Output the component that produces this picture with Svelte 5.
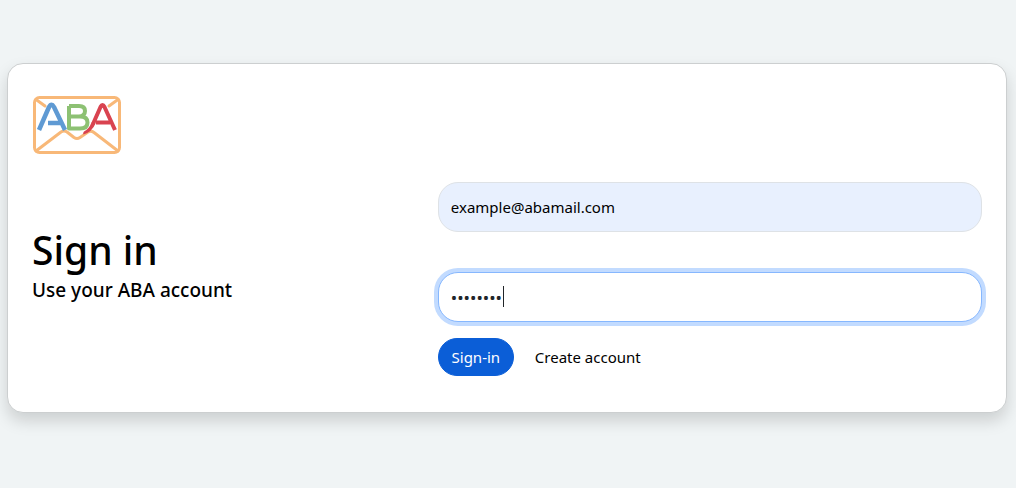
<script>
  let email = $state('example@abamail.com');
  let password = $state('password');
</script>

<main>
  <section class="card">
    <svg class="logo" viewBox="0 0 90 60" role="img" aria-label="ABA Mail">
      <g fill="none" stroke="#f8b878" stroke-width="3" stroke-linejoin="round" stroke-linecap="round">
        <rect x="2.500" y="2.500" width="85" height="55" rx="5" />
        <path d="M4 4.500 L13 11 M86 4.500 L77 11" />
        <path d="M4 56 L29 37 Q32 35 35 37 L42 42.500 Q45 44.500 48 42.500 L56 37 Q59 35 62 37.500 L86 56" />
      </g>
      <g fill="none" stroke-width="4" stroke-linejoin="round">
        <path stroke="#5f9ad3" stroke-width="4.500" d="M7 35 L17 12 Q19.500 7.500 22 12 L33 35 M16 28 H28" />
        <path stroke="#8dc173" d="M37 11 V33.500 H48 Q55.500 33.500 55.500 27.500 Q55.500 21.500 48 21.500 H37 M47 21.500 Q53 21 53 16 Q53 11 47 11 H37" />
        <path stroke="#d94350" d="M64 27.500 H78 M61 29 L68.500 12 Q70.500 8 72.500 12 L83 35" />
      </g>
      <path fill="#d94350" d="M59.500 27.500 L63.500 28.500 Q60 37 51.500 39.500 Q50.500 38 52 36.500 Q57 34 59.500 27.500 Z" />
    </svg>

    <div class="grid">
      <header>
        <h1>Sign in</h1>
        <p>Use your ABA account</p>
      </header>

      <form onsubmit={(e) => e.preventDefault()}>
        <input class="filled" type="email" aria-label="Email" autocomplete="off" bind:value={email} />
        <div class="field">
          <input class="active" type="password" aria-label="Password" autocomplete="off" bind:value={password} />
          <span class="caret"></span>
        </div>
        <div class="actions">
          <button type="submit">Sign-in</button>
          <a href="#create">Create account</a>
        </div>
      </form>
    </div>
  </section>
</main>

<style>
  :global(body) {
    margin: 0;
    background: #f0f4f5;
  }

  main {
    box-sizing: border-box;
    min-height: 100vh;
    padding: 63px 9px 75px 7px;
    font-family: 'Noto Sans', 'Open Sans', sans-serif;
    font-size: 15px;
    line-height: 24px;
    color: #000;
  }

  .card {
    padding: 31px 24px 36px;
    background: #fff;
    border: 1px solid #cccfd0;
    border-radius: 16px;
    box-shadow: 0 8px 16px rgba(0, 0, 0, 0.15);
  }

  .logo {
    display: block;
    width: 90px;
    height: 60px;
  }

  .grid {
    display: grid;
    grid-template-columns: repeat(12, 1fr);
    column-gap: 24px;
    padding-top: 27px;
  }

  header {
    grid-column: span 5;
    padding-top: 44px;
  }

  h1 {
    margin: 0;
    font-size: 39px;
    font-weight: 500;
    line-height: 48px;
  }

  p {
    margin: 0;
    padding-top: 4px;
    font-size: 19px;
    font-weight: 500;
  }

  form {
    grid-column: span 7;
  }

  input {
    display: block;
    box-sizing: border-box;
    width: 100%;
    height: 50px;
    padding: 0 12px;
    border: 1px solid #dee2e6;
    border-radius: 20px;
    outline: 0;
    background: #fff;
    font: inherit;
    color: #212529;
  }

  .filled {
    background: #e8f0fe;
    color: #000;
  }

  .field {
    position: relative;
    margin: 40px 0 16px;
  }

  .active {
    border-color: #86b7fe;
    box-shadow: 0 0 0 4px #c2dbff;
    font-size: 17px;
  }

  .caret {
    position: absolute;
    top: 14px;
    left: 65px;
    width: 1px;
    height: 21px;
    background: #212529;
  }

  .actions {
    display: flex;
    align-items: center;
    gap: 21px;
  }

  button {
    min-width: 76px;
    height: 38px;
    padding: 0 12px;
    border: 1px solid #0b5ed7;
    border-radius: 20px;
    background: #0b5ed7;
    color: #fff;
    font: inherit;
  }

  a {
    color: inherit;
    text-decoration: none;
  }
</style>
